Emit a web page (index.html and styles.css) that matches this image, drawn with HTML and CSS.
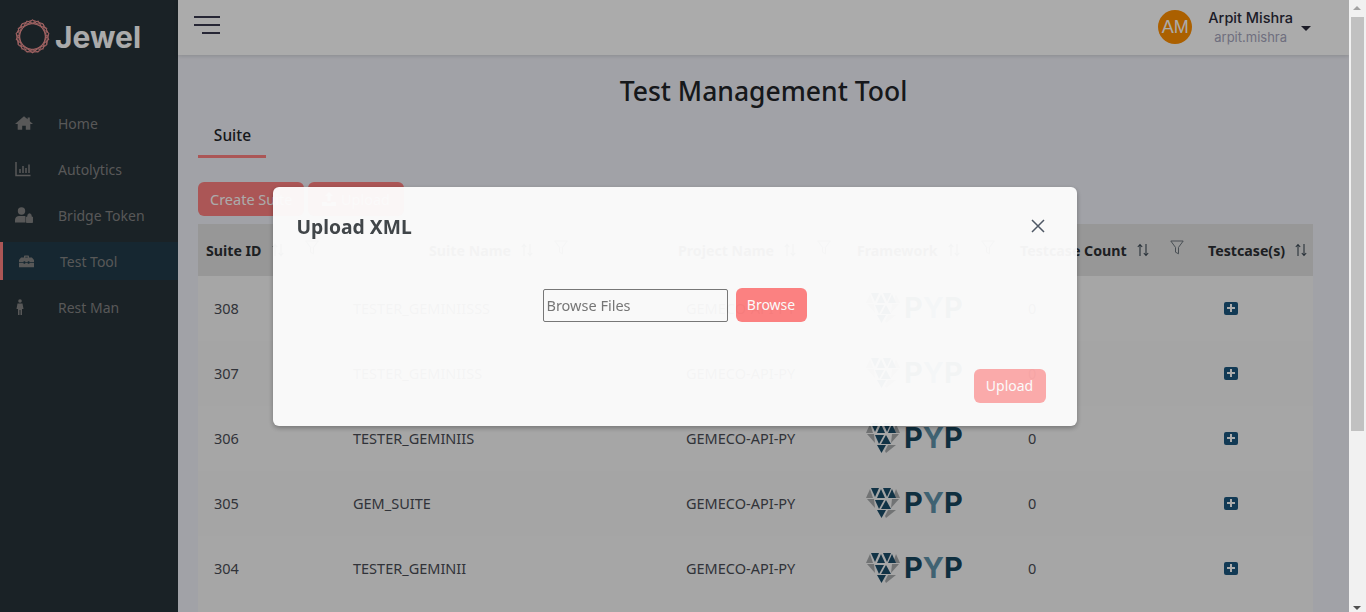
FILE: index.html
```html
<!DOCTYPE html>
<html lang="en">
<head>
    <meta charset="UTF-8">
    <meta name="viewport" content="width=device-width, initial-scale=1.0">
    <title>Jewel - Test Management Tool</title>
    <link rel="stylesheet" href="styles.css">
</head>
<body>
    <svg class="defs" width="0" height="0">
        <symbol id="sort" viewBox="0 0 12 14">
            <path d="M3 13V1.500M.8 4 3 1.500 5.200 4M9 1v11.500M6.800 10 9 12.500 11.200 10" fill="none" stroke="currentColor" stroke-width="1.100"/>
        </symbol>
        <symbol id="funnel" viewBox="0 0 14 15">
            <path d="M.8 1h12.400L8.500 7.400v6.400l-3-1.600V7.400z" fill="none" stroke="currentColor" stroke-width="1"/>
        </symbol>
        <symbol id="gem" viewBox="0 0 34 30">
            <g fill="#a9acae">
                <polygon points="4,1 0,10 7,10"/>
                <polygon points="30,1 34,10 27,10"/>
                <polygon points="1,11 8,11 9,20"/>
                <polygon points="33,11 26,11 25,20"/>
                <polygon points="22,22 30,22 20,30 19,28"/>
            </g>
            <g fill="#1a4c69">
                <polygon points="5,0 13,0 9,9"/>
                <polygon points="11,10 15,1 19,10"/>
                <polygon points="17,0 25,0 21,9"/>
                <polygon points="22,10 26,1 30,10"/>
                <polygon points="9,12 18,12 13,21"/>
                <polygon points="15,21 20,12 25,21"/>
                <polygon points="11,22 20,22 15.500,30"/>
            </g>
        </symbol>
    </svg>

    <div class="page">
        <aside class="sidebar">
            <div class="brand">
                <svg class="brand-mark" viewBox="-17 -17 34 34">
                    <g fill="none" stroke="#f09393" stroke-width=".9">
                        <polygon points="0,-16 10.300,-12.300 15.800,-2.800 13.900,8 5.500,15 -5.500,15 -13.900,8 -15.800,-2.800 -10.300,-12.300"/>
                        <polygon points="0,-16 15.800,-2.800 5.500,15 -13.900,8 -10.300,-12.300 10.300,-12.300 13.900,8 -5.500,15 -15.800,-2.800"/>
                        <polygon points="0,-16 15.800,-2.800 5.500,15 -13.900,8 -10.300,-12.300 10.300,-12.300 13.900,8 -5.500,15 -15.800,-2.800" transform="rotate(20)"/>
                    </g>
                </svg>
                <span class="brand-name">Jewel</span>
            </div>
            <ul class="nav">
                <li class="nav-item">
                    <svg class="nav-icon" viewBox="0 0 20 16" preserveAspectRatio="xMinYMid"><path d="M10 .5 0 9h3v6.500h5V11h4v4.500h5V9h3l-3.500-3V2h-2.500v1.800z" fill="currentColor"/></svg>
                    Home
                </li>
                <li class="nav-item">
                    <svg class="nav-icon" viewBox="0 0 18 16" preserveAspectRatio="xMinYMid"><path d="M1 1v13.500h14.500M5 8v4M8 5v7M11 7v5M14 3.500V12" fill="none" stroke="currentColor" stroke-width="1.500"/></svg>
                    Autolytics
                </li>
                <li class="nav-item">
                    <svg class="nav-icon" viewBox="0 0 18 16" preserveAspectRatio="xMinYMid"><circle cx="6.500" cy="4" r="3.700" fill="currentColor"/><path d="M0 15.500v-2.500c0-2.500 2-4 4-4h5c.8 0 1.300.2 1.500.4V15.500z" fill="currentColor"/><path d="M11.500 10h6v5.500h-6zM12.800 10V8.500a1.700 1.700 0 0 1 3.400 0V10" fill="currentColor" stroke="currentColor" stroke-width=".9"/></svg>
                    Bridge Token
                </li>
                <li class="nav-item active">
                    <svg class="nav-icon" viewBox="0 -2 21.600 19.200" preserveAspectRatio="xMinYMid"><path d="M6 3.500V2.200C6 1.500 6.500 1 7.200 1h3.600c.7 0 1.200.5 1.200 1.200v1.300h-1.500V2.500h-3v1zM2.500 3.500h13L18 6.500V9H12.500V8h-2v1h-3V8h-2v1H0V6.500zM0 10h5.500v1h2v-1h3v1h2v-1H18v5H0z" fill="currentColor"/></svg>
                    Test Tool
                </li>
                <li class="nav-item">
                    <svg class="nav-icon" viewBox="0 0 18 16" preserveAspectRatio="xMinYMid"><circle cx="5" cy="2" r="1.800" fill="currentColor"/><path d="M2.500 4.500h5l1 5.500h-1.500v6H5.500v-5h-1v5H3V10H1.500z" fill="currentColor"/></svg>
                    Rest Man
                </li>
            </ul>
        </aside>

        <div class="main">
            <header class="topbar">
                <div class="burger"><span></span><span></span><span class="short"></span></div>
                <div class="user">
                    <div class="avatar">AM</div>
                    <div class="user-text">
                        <div class="user-name">Arpit Mishra</div>
                        <div class="user-id">arpit.mishra</div>
                    </div>
                    <span class="caret"></span>
                </div>
            </header>

            <section class="content">
                <h1 class="title">Test Management Tool</h1>
                <div class="tabs"><div class="tab">Suite</div></div>
                <div class="actions">
                    <button class="btn">Create Suite</button>
                    <button class="btn btn-upload">
                        <svg class="upload-icon" viewBox="0 0 14 14"><path d="M7 0 3 4h2.500v5h3V4H11zM0 10h4.500c.3 1 1.300 1.300 2.500 1.300S9.200 11 9.500 10H14v4H0z" fill="currentColor"/></svg>
                        Upload
                    </button>
                </div>

                <table class="suites">
                    <colgroup>
                        <col class="c-id"><col class="c-name"><col class="c-project"><col class="c-framework"><col class="c-count"><col class="c-cases">
                    </colgroup>
                    <thead>
                        <tr>
                            <th><div class="th-in">Suite ID<svg class="sort"><use href="#sort"/></svg><svg class="funnel"><use href="#funnel"/></svg></div></th>
                            <th><div class="th-in th-center">Suite Name<svg class="sort"><use href="#sort"/></svg><svg class="funnel"><use href="#funnel"/></svg></div></th>
                            <th><div class="th-in">Project Name<svg class="sort"><use href="#sort"/></svg><svg class="funnel"><use href="#funnel"/></svg></div></th>
                            <th><div class="th-in">Framework<svg class="sort"><use href="#sort"/></svg><svg class="funnel"><use href="#funnel"/></svg></div></th>
                            <th><div class="th-in">Testcase Count<svg class="sort"><use href="#sort"/></svg><svg class="funnel"><use href="#funnel"/></svg></div></th>
                            <th><div class="th-in">Testcase(s)<svg class="sort"><use href="#sort"/></svg></div></th>
                        </tr>
                    </thead>
                    <tbody>
                        <tr>
                            <td>308</td><td>TESTER_GEMINIISSS</td><td>GEMECO-API-PY</td>
                            <td><div class="pyp"><svg class="gem"><use href="#gem"/></svg><span class="pyp-text">P<span class="pyp-y">Y</span>P</span></div></td><td>0</td>
                            <td><span class="plus"></span></td>
                        </tr>
                        <tr>
                            <td>307</td><td>TESTER_GEMINIISS</td><td>GEMECO-API-PY</td>
                            <td><div class="pyp"><svg class="gem"><use href="#gem"/></svg><span class="pyp-text">P<span class="pyp-y">Y</span>P</span></div></td><td>0</td>
                            <td><span class="plus"></span></td>
                        </tr>
                        <tr>
                            <td>306</td><td>TESTER_GEMINIIS</td><td>GEMECO-API-PY</td>
                            <td><div class="pyp"><svg class="gem"><use href="#gem"/></svg><span class="pyp-text">P<span class="pyp-y">Y</span>P</span></div></td><td>0</td>
                            <td><span class="plus"></span></td>
                        </tr>
                        <tr>
                            <td>305</td><td>GEM_SUITE</td><td>GEMECO-API-PY</td>
                            <td><div class="pyp"><svg class="gem"><use href="#gem"/></svg><span class="pyp-text">P<span class="pyp-y">Y</span>P</span></div></td><td>0</td>
                            <td><span class="plus"></span></td>
                        </tr>
                        <tr>
                            <td>304</td><td>TESTER_GEMINII</td><td>GEMECO-API-PY</td>
                            <td><div class="pyp"><svg class="gem"><use href="#gem"/></svg><span class="pyp-text">P<span class="pyp-y">Y</span>P</span></div></td><td>0</td>
                            <td><span class="plus"></span></td>
                        </tr>
                    </tbody>
                </table>
                <div class="table-rest"></div>
            </section>
        </div>

        <div class="scrollbar">
            <span class="arrow-up"></span>
            <div class="thumb"></div>
            <span class="arrow-down"></span>
        </div>

        <!-- backdrop and dialog, stops short of the scrollbar -->
        <div class="backdrop">
            <div class="modal">
                <div class="modal-head">
                    <h2>Upload XML</h2>
                    <svg class="close" viewBox="0 0 14 14"><path d="M1 1l12 12M13 1 1 13" stroke="currentColor" stroke-width="1.500"/></svg>
                </div>
                <div class="modal-body">
                    <input class="file-input" type="text" placeholder="Browse Files">
                    <button class="btn btn-browse">Browse</button>
                </div>
                <div class="modal-foot">
                    <button class="btn btn-send">Upload</button>
                </div>
            </div>
        </div>
    </div>
</body>
</html>
```

FILE: styles.css
```css
* {
    box-sizing: border-box;
}
html, body {
    margin: 0;
    height: 612px;
    overflow: hidden;
}
body {
    font-family: "Noto Sans", "Open Sans", sans-serif;
    color: #212529;
    background-color: #f1f2f9;
}
.defs {
    position: absolute;
}
.page {
    position: relative;
    display: flex;
    height: 612px;
}

/* sidebar */
.sidebar {
    width: 178px;
    flex: none;
    background-color: #273339;
    color: #848484;
}
.brand {
    display: flex;
    align-items: flex-start;
    gap: 5px;
    padding: 19px 0 0 15px;
    height: 104px;
}
.brand-mark {
    width: 35px;
    height: 35px;
}
.brand-name {
    font-family: Inter, "Liberation Sans", sans-serif;
    font-weight: 700;
    font-size: 30px;
    line-height: 36px;
    color: #fff;
}
.nav {
    list-style-type: none;
    margin: 0;
    padding: 0;
}
.nav-item {
    display: flex;
    align-items: center;
    gap: 25px;
    height: 38px;
    margin-bottom: 8px;
    padding-left: 15px;
    font-size: 14px;
}
.nav-item.active {
    background-color: #213b49;
    border-left: 3px solid #ff8080;
    padding-left: 16px;
    gap: 23px;
}
.nav-icon {
    width: 18px;
    height: 16px;
    flex: none;
}

/* top bar */
.main {
    flex: 1;
    min-width: 0;
}
.topbar {
    height: 55px;
    background-color: #fff;
    box-shadow: 0 1px 4px rgba(0, 0, 0, 0.15);
    display: flex;
    justify-content: space-between;
    align-items: flex-start;
    padding: 16px 38px 0 16px;
}
.burger {
    width: 26px;
}
.burger span {
    display: block;
    height: 2px;
    margin-bottom: 6px;
    background-color: #3a3a50;
}
.burger .short {
    margin-left: 8px;
}
.user {
    display: flex;
    align-items: flex-start;
    margin-top: -6px;
}
.avatar {
    width: 34px;
    height: 34px;
    border-radius: 50%;
    background-color: #ff8f00;
    color: #fff;
    font-family: "Liberation Sans", sans-serif;
    font-size: 18px;
    line-height: 34px;
    text-align: center;
}
.user-text {
    margin: -1px 0 0 16px;
    text-align: center;
    font-family: Inter, "Liberation Sans", sans-serif;
}
.user-name {
    font-size: 14.500px;
    font-weight: 500;
    line-height: 17px;
    color: #2b2b3b;
}
.user-id {
    font-size: 13px;
    line-height: 17px;
    margin-top: 3px;
    color: #a6a6bd;
}
.caret {
    width: 0;
    height: 0;
    margin: 16px 0 0 8px;
    border-left: 5.500px solid transparent;
    border-right: 5.500px solid transparent;
    border-top: 5.500px solid #2b2b3b;
}

/* content */
.content {
    padding: 0 36px 0 20px;
}
.title {
    margin: 0 0 0 16px;
    padding-top: 16px;
    text-align: center;
    font-size: 26.500px;
    font-weight: 500;
    line-height: 40px;
    color: #212529;
}
.tabs {
    margin-top: 12px;
}
.tab {
    display: inline-block;
    width: 68px;
    height: 35px;
    padding-left: 1px;
    text-align: center;
    font-size: 15.500px;
    font-weight: 500;
    line-height: 24px;
    border-bottom: 3px solid #ff8080;
}
.actions {
    display: flex;
    gap: 4px;
    margin-top: 24px;
}
.btn {
    height: 34px;
    padding: 0 12px;
    border: none;
    border-radius: 6px;
    background-color: #ff8080;
    color: #fff;
    font-family: inherit;
    font-size: 14px;
    white-space: nowrap;
}
.actions .btn {
    width: 106px;
    font-size: 14.500px;
}
.actions .btn-upload {
    width: 96px;
    display: flex;
    align-items: center;
    justify-content: center;
    gap: 5px;
    padding: 0;
}
.upload-icon {
    width: 14px;
    height: 14px;
}

/* table */
.suites {
    width: 1115px;
    table-layout: fixed;
    border-collapse: collapse;
    margin-top: 8px;
    font-size: 14.500px;
}
.c-id { width: 139px; }
.c-name { width: 333px; }
.c-project { width: 179px; }
.c-framework { width: 163px; }
.c-count { width: 188px; }
.c-cases { width: 113px; }
.suites th {
    height: 52px;
    padding: 0 8px;
    background-color: #e2e2e2;
    text-align: left;
    font-size: 14.200px;
    font-weight: 700;
    color: #2c2f33;
}
.th-in {
    display: flex;
    align-items: center;
    white-space: nowrap;
}
.th-center {
    justify-content: center;
    padding-right: 10px;
}
.sort {
    width: 12px;
    height: 14px;
    margin-left: 10px;
    flex: none;
    color: #3d4a55;
}
.funnel {
    width: 14px;
    height: 15px;
    margin: -6px 0 0 21px;
    flex: none;
    color: #6c757d;
}
.suites td {
    height: 65px;
    padding: 0 16px 1px;
    background-color: #f8f8f8;
    color: #4a4d55;
}
.suites tr:nth-child(even) td {
    background-color: #f6f6f6;
}
.pyp {
    display: flex;
    align-items: center;
    gap: 4px;
    height: 30px;
    margin-left: 1px;
}
.gem {
    width: 34px;
    height: 30px;
    flex: none;
}
.pyp-text {
    font-family: Inter, "Liberation Sans", sans-serif;
    font-weight: 700;
    font-size: 29px;
    line-height: 30px;
    color: #17465f;
}
.pyp-y {
    color: #5f93aa;
}
.plus {
    display: block;
    position: relative;
    width: 14px;
    height: 13px;
    margin-left: 8px;
    border-radius: 2px;
    background-color: #1b577f;
}
.plus::before, .plus::after {
    content: "";
    position: absolute;
    background-color: #fff;
}
.plus::before {
    left: 3px;
    top: 5.500px;
    width: 8px;
    height: 2px;
}
.plus::after {
    left: 6px;
    top: 2.500px;
    width: 2px;
    height: 8px;
}
.table-rest {
    width: 1115px;
    height: 11px;
    background-color: #f8f8f8;
}

.scrollbar {
    position: relative;
    width: 17px;
    flex: none;
    background-color: #f1f1f1;
}
.thumb {
    position: absolute;
    top: 17px;
    left: 2px;
    width: 13px;
    height: 414px;
    background-color: #c1c1c1;
}
.arrow-up, .arrow-down {
    position: absolute;
    left: 4px;
    width: 0;
    height: 0;
    border-left: 4px solid transparent;
    border-right: 4px solid transparent;
}
.arrow-up {
    top: 6px;
    border-bottom: 4px solid #a3a3a3;
}
.arrow-down {
    bottom: 2px;
    border-top: 4px solid #505050;
}

/* modal */
.backdrop {
    position: absolute;
    top: 0;
    left: 0;
    right: 17px;
    bottom: 0;
    background-color: rgba(0, 0, 0, 0.33);
    display: flex;
    justify-content: center;
    padding-top: 187px;
}
.modal {
    width: 804px;
    height: 239px;
    padding: 0 31px 0 24px;
    border-radius: 6px;
    background-color: #fdfdfd;
    box-shadow: 0 2px 5px rgba(0, 0, 0, 0.3);
    opacity: 0.96;
}
.modal-head {
    display: flex;
    justify-content: space-between;
    align-items: center;
    height: 78px;
}
.modal-head h2 {
    margin: 0;
    font-size: 19.300px;
    font-weight: 700;
    color: #3d4246;
}
.close {
    width: 14px;
    height: 14px;
    margin-right: 1px;
    color: #4b5563;
}
.modal-body {
    display: flex;
    justify-content: center;
    gap: 8px;
    padding-top: 23px;
    margin-left: 7px;
}
.file-input {
    width: 185px;
    height: 33px;
    margin-top: 1px;
    padding: 0 3px 2px;
    border: 1px solid #767676;
    border-radius: 2px;
    background: transparent;
    font-family: inherit;
    font-size: 14.500px;
}
.btn-browse {
    width: 71px;
    padding: 0 0 1px;
}
.modal-foot {
    display: flex;
    justify-content: flex-end;
    margin-top: 47px;
}
.btn-send {
    width: 72px;
    padding: 0 0 1px;
    opacity: 0.65;
}
```
